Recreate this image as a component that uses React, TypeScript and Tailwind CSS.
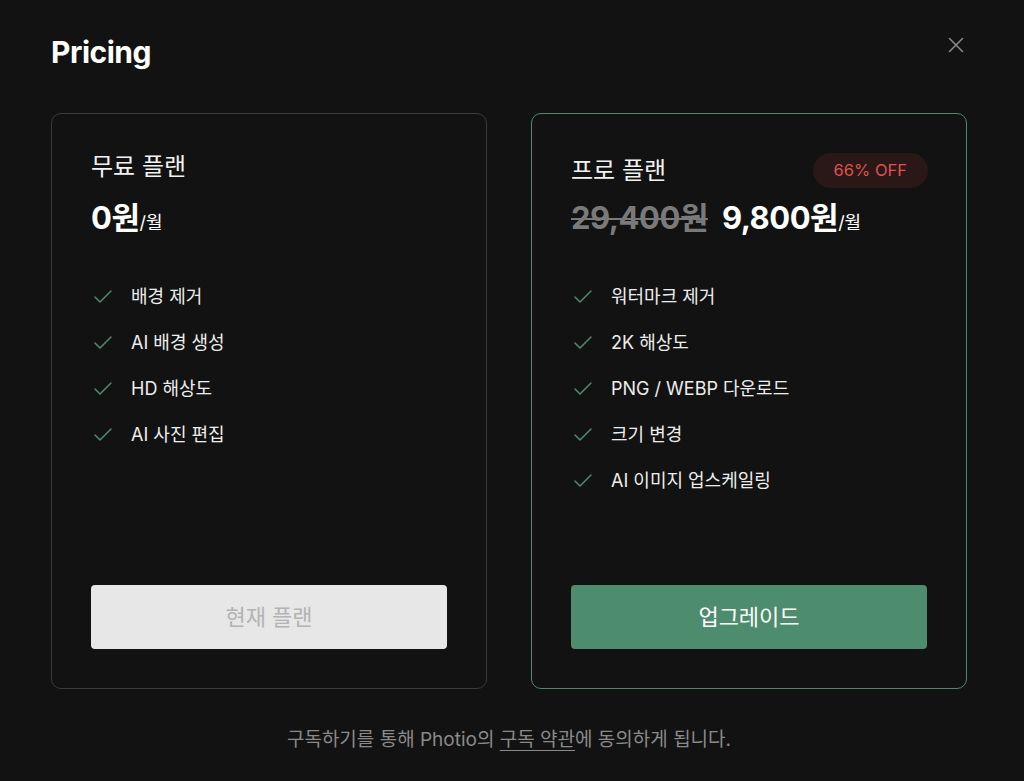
import { Check, X } from "lucide-react";

const font = {
  fontFamily: '"Inter", "Noto Sans CJK KR", sans-serif',
};

const freeFeatures = ["배경 제거", "AI 배경 생성", "HD 해상도", "AI 사진 편집"];
const proFeatures = [
  "워터마크 제거",
  "2K 해상도",
  "PNG / WEBP 다운로드",
  "크기 변경",
  "AI 이미지 업스케일링",
];

function FeatureList({ items }: { items: string[] }) {
  return (
    <ul className="mt-[47px] flex flex-col gap-[21px]">
      {items.map((item) => (
        <li key={item} className="flex items-center gap-[16px] text-[18px] leading-[25px] text-[#ededed]">
          <Check className="h-6 w-6 shrink-0 text-[#4e8c6e]" strokeWidth={1.5} />
          <span>{item}</span>
        </li>
      ))}
    </ul>
  );
}

export default function App() {
  return (
    <main className="min-h-screen bg-[#121212] px-[51px] pt-[33px] pb-[24px]" style={font}>
      <header className="flex items-start justify-between">
        <h1 className="text-[30px] font-bold leading-[38px] tracking-[-0.5px] text-white">Pricing</h1>
        <button className="mr-[4px] mt-[-1px] text-[#8a8a8a]">
          <X className="h-[26px] w-[26px]" strokeWidth={1.5} />
        </button>
      </header>

      <div className="mt-[42px] grid w-[916px] grid-cols-2 gap-[44px]">
        <section className="flex h-[576px] flex-col rounded-[10px] border border-[#3b3b3b] p-[39px]">
          <h2 className="text-[24px] leading-[28px] text-[#f2f2f2]">무료 플랜</h2>
          <div className="mt-[18px] flex items-baseline text-white">
            <span className="text-[31px] font-bold leading-[38px] tracking-[-0.5px]">0원</span>
            <span className="text-[18px]">/월</span>
          </div>
          <FeatureList items={freeFeatures} />
          <button className="mt-auto h-[64px] w-full rounded-[4px] bg-[#e7e7e7] text-[22px] text-[#b3b3b3]">
            현재 플랜
          </button>
        </section>

        <section className="flex h-[576px] flex-col rounded-[10px] border border-[#4b8b6b] p-[39px]">
          <div className="flex items-center justify-between">
            <h2 className="text-[24px] leading-[28px] text-[#f2f2f2]">프로 플랜</h2>
            <span className="mr-[-1px] flex h-[35px] items-center rounded-full bg-[#2a1717] px-[21px] text-[16.5px] text-[#e0524d]">
              66% OFF
            </span>
          </div>
          <div className="mt-[11px] flex items-baseline text-white">
            <span className="text-[31px] font-bold leading-[38px] tracking-[-0.5px] text-[#7a7a7a] line-through decoration-[2px]">
              29,400원
            </span>
            <span className="ml-[14px] text-[31px] font-bold leading-[38px] tracking-[-0.5px]">9,800원</span>
            <span className="text-[18px]">/월</span>
          </div>
          <FeatureList items={proFeatures} />
          <button className="mt-auto h-[64px] w-full rounded-[4px] bg-[#4e8c6e] text-[22px] text-white">
            업그레이드
          </button>
        </section>
      </div>

      <p className="mt-[38px] w-[916px] text-center text-[19px] leading-[26px] text-[#8a8a8a]">
        구독하기를 통해 Photio의 <span className="underline underline-offset-[4px]">구독 약관</span>에 동의하게 됩니다.
      </p>
    </main>
  );
}
